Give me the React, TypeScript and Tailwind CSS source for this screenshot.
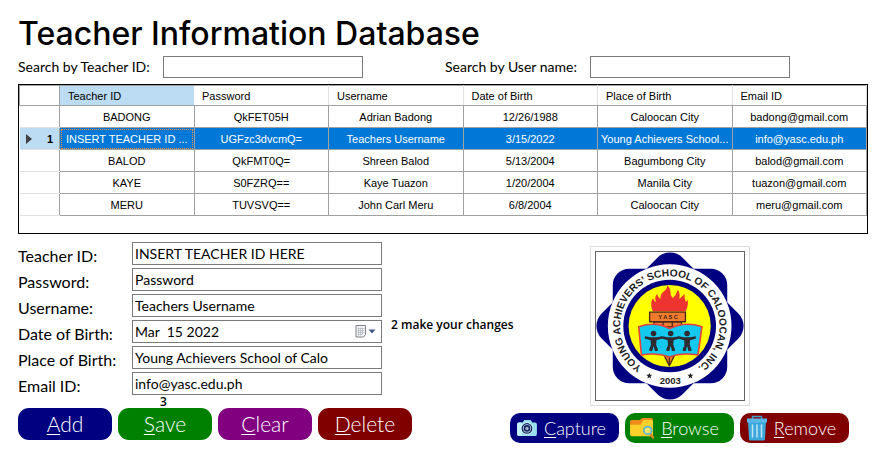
import React from "react";

const columns = ["Teacher ID", "Password", "Username", "Date of Birth", "Place of Birth", "Email ID"];

const teachers = [
  ["BADONG", "QkFET05H", "Adrian Badong", "12/26/1988", "Caloocan City", "badong@gmail.com"],
  ["INSERT TEACHER ID ...", "UGFzc3dvcmQ=", "Teachers Username", "3/15/2022", "Young Achievers School...", "info@yasc.edu.ph"],
  ["BALOD", "QkFMT0Q=", "Shreen Balod", "5/13/2004", "Bagumbong City", "balod@gmail.com"],
  ["KAYE", "S0FZRQ==", "Kaye Tuazon", "1/20/2004", "Manila City", "tuazon@gmail.com"],
  ["MERU", "TUVSVQ==", "John Carl Meru", "6/8/2004", "Caloocan City", "meru@gmail.com"],
];

const selected = 1;

function SearchField({ id, label }: { id: string; label: string }) {
  return (
    <div className="flex items-center gap-2">
      <label htmlFor={id} className="shrink-0 basis-[137px] whitespace-nowrap text-sm leading-[22px]">
        {label}
      </label>
      <input id={id} type="text" className="h-[22px] w-[200px] min-w-0 border border-[#7a7a7a] bg-white px-1 text-sm outline-none" />
    </div>
  );
}

function TeacherTable() {
  return (
    <div className="h-[150px] overflow-hidden border border-black">
      <table className="w-full table-fixed border-collapse font-['Liberation_Sans',Arial,sans-serif] text-[11px] leading-4">
        <thead>
          <tr className="h-5">
            <th className="w-10 border border-[#a0a0a0]" aria-label="Row" />
            {columns.map((c, i) => (
              <th
                key={c}
                scope="col"
                className={
                  i === 0
                    ? "border-y border-[#a0a0a0] bg-[#bbdcf3] p-0 pl-2 text-left font-normal"
                    : "border-y border-r border-y-[#a0a0a0] border-r-[#e0e0e0] p-0 pl-2 text-left font-normal"
                }
              >
                {c}
              </th>
            ))}
          </tr>
        </thead>
        <tbody>
          {teachers.map((row, r) => (
            <tr key={row[0]} className={r === selected ? "h-[22px] bg-[#0078d7] text-white" : "h-[22px]"}>
              <th
                scope="row"
                className={
                  r === selected
                    ? "border-y border-r border-y-[#e0e0e0] border-r-[#a0a0a0] bg-[#bbdcf3] p-0 text-black"
                    : "border-y border-r border-y-[#e0e0e0] border-r-[#a0a0a0] p-0"
                }
              >
                {r === selected && (
                  <span className="flex items-center justify-between pl-[6px] pr-[6px]">
                    <svg viewBox="0 0 6 10" className="h-[10px] w-[6px]" aria-hidden="true">
                      <path d="M0 0 6 5 0 10Z" fill="#404040" />
                    </svg>
                    1
                  </span>
                )}
              </th>
              {row.map((cell, c) => (
                <td
                  key={c}
                  className={
                    r === selected && c === 0
                      ? "whitespace-nowrap border border-[#a0a0a0] p-0 text-center outline-1 -outline-offset-2 outline-dotted outline-[#ff8728]"
                      : "whitespace-nowrap border border-[#a0a0a0] p-0 text-center"
                  }
                >
                  {cell}
                </td>
              ))}
            </tr>
          ))}
        </tbody>
      </table>
    </div>
  );
}

const fields = [
  { id: "teacher-id", label: "Teacher ID:", value: "INSERT TEACHER ID HERE" },
  { id: "password", label: "Password:", value: "Password" },
  { id: "username", label: "Username:", value: "Teachers Username" },
  { id: "dob", label: "Date of Birth:", value: "Mar  15 2022" },
  { id: "pob", label: "Place of Birth:", value: "Young Achievers School of Calo" },
  { id: "email", label: "Email ID:", value: "info@yasc.edu.ph" },
];

function CalendarIcon() {
  return (
    <svg viewBox="0 0 21 13" className="h-[13px] w-[21px]" aria-hidden="true">
      <path d="M1 .5h9.500v9l-2 2.500H1z" fill="#f4f6f8" stroke="#7d8087" />
      <path d="M2.500 3.500h7M2.500 5.500h7M2.500 7.500h7M2.500 9.500h5M3.500 2.500v8M5.500 2.500v8M7.500 2.500v7" stroke="#b4bac2" strokeWidth=".8" />
      <path d="M13.500 4.500h7L17 8.500z" fill="#41598c" />
    </svg>
  );
}

function Field({ id, label, value }: { id: string; label: string; value: string }) {
  return (
    <div className="flex items-center">
      <label htmlFor={id} className="w-[114px] shrink-0 whitespace-nowrap pt-1 text-base leading-[19px]">
        {label}
      </label>
      <div className="flex h-[23px] w-[250px] items-center border border-[#7a7a7a] bg-white pr-[5px]">
        <input id={id} type="text" defaultValue={value} className="h-full min-w-0 flex-1 whitespace-pre bg-transparent px-0.5 text-sm outline-none" />
        {id === "dob" && (
          <button type="button" aria-label="Open calendar" className="shrink-0">
            <CalendarIcon />
          </button>
        )}
      </div>
    </div>
  );
}

function ActionButton({ text, color }: { text: string; color: string }) {
  return (
    <button type="button" className={`h-8 w-[94px] rounded-[11px] text-[21px] font-light leading-8 text-white ${color}`}>
      <span className="underline decoration-1 underline-offset-2">{text[0]}</span>
      {text.slice(1)}
    </button>
  );
}

function PhotoButton({ text, color, icon }: { text: string; color: string; icon: React.ReactNode }) {
  return (
    <button type="button" className={`flex h-[30px] w-[109px] items-center gap-0.5 rounded-[10px] pl-[5px] pr-2.5 text-lg font-light leading-[30px] text-white ${color}`}>
      <span className="flex w-6 shrink-0 justify-center">{icon}</span>
      <span className="flex-1 text-center">
        <span className="underline decoration-1 underline-offset-2">{text[0]}</span>
        {text.slice(1)}
      </span>
    </button>
  );
}

function CameraIcon() {
  return (
    <svg viewBox="0 0 24 20" className="h-[18px] w-[22px]" aria-hidden="true">
      <path d="M3 4h4l2-3h7l2 3h3q2 0 2 2v10q0 3-2 3H3q-2 0-2-2V6q0-2 2-2z" fill="#96e0ee" />
      <path d="M3 4h3v15H3q-2 0-2-2V6q0-2 2-2z" fill="#c4f2f6" />
      <circle cx="12" cy="10.500" r="7" fill="#d4f4f8" />
      <circle cx="12" cy="10.500" r="6" fill="#17205e" />
      <circle cx="12" cy="10.500" r="4.600" fill="#b4e2f0" />
      <circle cx="12" cy="10.500" r="3.700" fill="#17205e" />
      <circle cx="12" cy="10.500" r="1.900" fill="#a8b8cc" />
    </svg>
  );
}

function FolderIcon() {
  return (
    <svg viewBox="0 0 26 22" className="h-[21px] w-[25px] shrink-0" aria-hidden="true">
      <path d="M0 4q0-2 2-2h8l3-2h9q2 0 2 2v14q0 2-2 2H2q-2 0-2-2z" fill="#f08c1d" />
      <path d="M0 7h11l3-5h8q2 0 2 2v13q0 2-2 2H2q-2 0-2-2z" fill="#fbd02b" />
      <path d="m20.500 16 3.500 4.500" stroke="#e08a2a" strokeWidth="2.500" strokeLinecap="round" />
      <circle cx="18.500" cy="13" r="4" fill="#ffe76a" stroke="#58b6d8" strokeWidth="1.800" />
    </svg>
  );
}

function TrashIcon() {
  return (
    <svg viewBox="0 0 22 26" className="h-[26px] w-[22px]" aria-hidden="true">
      <path d="M6.500 4V1.500h9V4" fill="none" stroke="#3d9fd0" strokeWidth="1.500" />
      <path d="M2 6h18l-1 18q0 1.500-1.500 1.500h-13Q3 25.500 3 24z" fill="#3da8de" />
      <path d="M1 3.500h20v4H1z" fill="#58b9e8" />
      <path d="M6.500 10v12M11 10v12M15.500 10v12" stroke="#bfe6f7" strokeWidth="1.500" strokeLinecap="round" />
    </svg>
  );
}

function Person({ x }: { x: number }) {
  return (
    <g transform={`translate(${x} 0)`} fill="#2e2a30">
      <circle cx="0" cy="281" r="8.500" />
      <path d="M-26 289 -10 292H10L26 289 27 296 9 301 8 316 13 328V334H4L0 318-4 334H-13V328L-8 316-9 301-27 296Z" />
    </g>
  );
}

function SchoolSeal() {
  return (
    <svg viewBox="30 33 450 450" className="h-full w-full" role="img" aria-label="School seal">
      <defs>
        <path id="ring" d="M 254 409 A 151 151 0 1 1 255 409" />
      </defs>
      <g fill="#000080">
        <rect x="81" y="84" width="348" height="348" rx="50" />
        <rect x="81" y="84" width="348" height="348" rx="54" transform="rotate(45 255 258)" />
      </g>
      <circle cx="254" cy="258" r="188" fill="#fff" />
      <circle cx="254" cy="258" r="141" fill="#000080" />
      <circle cx="254" cy="258" r="125" fill="#ffff00" />
      <text fill="#222" className="font-['Liberation_Sans',Arial,sans-serif] text-[31px] font-bold">
        <textPath href="#ring" startOffset="50%" textAnchor="middle">
          YOUNG ACHIEVERS’ SCHOOL OF CALOOCAN, INC.
        </textPath>
      </text>
      <text x="256" y="434" textAnchor="middle" fill="#222" className="font-['Liberation_Sans',Arial,sans-serif] text-[29px] font-bold">
        2003
      </text>
      <g fill="#222">
        <path d="M192 400l2.500 6 6.500.5-5 4.500 1.500 6.500-5.500-3.500-5.500 3.500 1.500-6.500-5-4.500 6.500-.5z" />
        <path d="M317 400l2.500 6 6.500.5-5 4.500 1.500 6.500-5.500-3.500-5.500 3.500 1.500-6.500-5-4.500 6.500-.5z" />
      </g>
      <path d="M203 214Q192 190 203 174Q207 184 213 186Q206 172 216 160Q218 172 226 175Q226 160 235 154Q245 148 247 135Q258 144 257 164Q261 168 263 174Q274 164 279 148Q287 160 283 175Q290 172 299 160Q298 172 303 184Q308 182 308 177Q313 196 302 214Z" fill="#ee3430" />
      <g fill="#f07c2c" stroke="#4a2a20" strokeWidth="4">
        <path d="M236 345h34l-17 34z" />
        <path d="M253 350v24" />
        <path d="M206 245h84v16h-84zM234 245v16M262 245v16" />
        <path d="M193 216h109v29H193z" />
      </g>
      <text x="249" y="236" textAnchor="middle" fill="#3a2018" className="font-['Liberation_Sans',Arial,sans-serif] text-[17px] font-bold">
        Y A S C
      </text>
      <path d="M160 260Q210 243 254 266 300 243 352 260L340 346Q290 338 254 352 215 338 168 346Z" fill="#14c8ee" stroke="#e8403c" strokeWidth="5" strokeLinejoin="round" />
      <Person x={205} />
      <Person x={257} />
      <Person x={307} />
    </svg>
  );
}

export default function App() {
  return (
    <main className="bg-white pb-4 pl-[18px] pr-[19px] pt-3 font-['Century_Gothic',Lato,sans-serif] text-base text-black">
      <h1 className="font-['Inter',sans-serif] text-[32px] font-medium leading-[44px]">Teacher Information Database</h1>

      <div className="mb-1.5 grid grid-cols-2 gap-1">
        <SearchField id="search-id" label="Search by Teacher ID:" />
        <SearchField id="search-name" label="Search by User name:" />
      </div>

      <TeacherTable />

      <div className="mt-2 flex justify-between gap-4 pr-[19px]">
        <section aria-label="Teacher details">
          <div className="flex items-center">
            <div className="flex flex-col gap-[3px]">
              {fields.map((f) => (
                <Field key={f.id} {...f} />
              ))}
            </div>
            <p className="-mr-8 whitespace-nowrap pl-[9px] pt-3 font-['Open_Sans',sans-serif] text-xs font-semibold">2 make your changes</p>
          </div>
          <p className="pl-[142px] font-['Open_Sans',sans-serif] text-xs font-semibold leading-[13px]">3</p>
          <div className="flex gap-1.5">
            <ActionButton text="Add" color="bg-[#000080]" />
            <ActionButton text="Save" color="bg-[#008000]" />
            <ActionButton text="Clear" color="bg-[#800080]" />
            <ActionButton text="Delete" color="bg-[#800000]" />
          </div>
        </section>

        <section aria-label="Photo" className="shrink-0 pt-1">
          <div className="ml-20 h-40 w-40 border border-[#dcdcdc] p-1">
            <div className="h-full w-full border border-[#646464]">
              <SchoolSeal />
            </div>
          </div>
          <div className="mt-[7px] flex gap-1.5">
            <PhotoButton text="Capture" color="bg-[#000080]" icon={<CameraIcon />} />
            <PhotoButton text="Browse" color="bg-[#008000]" icon={<FolderIcon />} />
            <PhotoButton text="Remove" color="bg-[#800000]" icon={<TrashIcon />} />
          </div>
        </section>
      </div>
    </main>
  );
}
